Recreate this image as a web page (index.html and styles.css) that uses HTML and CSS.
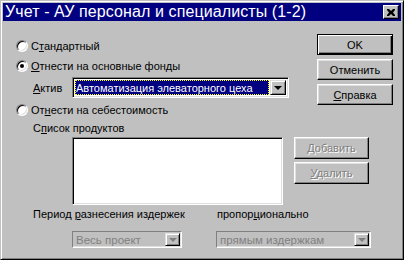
FILE: index.html
```html
<!DOCTYPE html>
<html lang="ru">
<head>
<meta charset="utf-8">
<title>Учет</title>
<link rel="stylesheet" href="styles.css">
</head>
<body>
<div class="window">
  <div class="titlebar">
    <span class="title">Учет - АУ персонал и специалисты (1-2)</span>
    <span class="close"><svg width="8" height="7" viewBox="0 0 8 7"><path d="M0 0h2l2 2 2-2h2v1L6 3.5 8 6v1H6L4 5 2 7H0V6l2-2.5L0 1z" fill="#000"/></svg></span>
  </div>
  <div class="body">
    <div class="top">
      <div class="top-left">
        <div class="radio-row r1"><span class="radio"></span><span>С<u>т</u>андартный</span></div>
        <div class="radio-row r2"><span class="radio checked"></span><span><u>О</u>тнести на основные фонды</span></div>
        <div class="field-row">
          <span class="lbl"><u>А</u>ктив</span>
          <div class="combo combo-active">
            <span class="combo-text"><span class="sel">Автоматизация элеваторного цеха</span></span>
            <span class="drop"><span class="arrow"></span></span>
          </div>
        </div>
        <div class="radio-row r3"><span class="radio"></span><span>От<u>н</u>ести на себестоимость</span></div>
      </div>
      <div class="top-right">
        <div class="btn default">OK</div>
        <div class="btn">Отменить</div>
        <div class="btn"><u>С</u>правка</div>
      </div>
    </div>
    <div class="bottom">
      <div class="lbl list-lbl">С<u>п</u>исок продуктов</div>
      <div class="list-row">
        <div class="listbox"></div>
        <div class="side-btns">
          <div class="btn disabled"><span><u>Д</u>обавить</span></div>
          <div class="btn disabled"><span><u>У</u>далить</span></div>
        </div>
      </div>
      <div class="period-row">
        <span class="lbl period-lbl">Период <u>р</u>азнесения издержек</span>
        <span class="lbl prop-lbl">пропор<u>ц</u>ионально</span>
      </div>
      <div class="combos-row">
        <div class="combo combo-dis w-period"><span class="combo-text">Весь проект</span><span class="drop"><span class="arrow"></span></span></div>
        <div class="combo combo-dis w-prop"><span class="combo-text">прямым издержкам</span><span class="drop"><span class="arrow"></span></span></div>
      </div>
    </div>
  </div>
</div>
</body>
</html>
```

FILE: styles.css
```css
* { box-sizing: border-box; }
html, body { margin: 0; padding: 0; }
body {
  width: 404px;
  height: 260px;
  overflow: hidden;
  font-family: "Liberation Sans", Arial, sans-serif;
  font-size: 11px;
  color: #000;
  background: #c0c0c0;
}
u { text-decoration: underline; text-underline-offset: 1px; }

.window {
  width: 404px;
  height: 260px;
  background: #c0c0c0;
  border: 1px solid;
  border-color: #c0c0c0 #000 #000 #c0c0c0;
  box-shadow: inset 1px 1px #fff, inset -1px -1px #808080;
  padding: 2px;
  display: flex;
  flex-direction: column;
}

.titlebar {
  height: 18px;
  background: #000080;
  color: #fff;
  display: flex;
  align-items: center;
  padding: 0 2px 0 2px;
}
.title {
  flex: 1;
  font-size: 16px;
  line-height: 18px;
  letter-spacing: 0.1px;
  white-space: nowrap;
}
.close {
  width: 16px;
  height: 14px;
  background: #c0c0c0;
  border: 1px solid;
  border-color: #fff #000 #000 #fff;
  box-shadow: inset -1px -1px #808080;
  display: flex;
  align-items: center;
  justify-content: center;
  padding-right: 1px;
}

.body {
  flex: 1;
  display: flex;
  flex-direction: column;
}

.top {
  display: flex;
}
.top-left {
  flex: 1;
  padding-left: 13px;
  padding-top: 15px;
}
.top-right {
  width: 76px;
  margin-right: 8px;
  padding-top: 13px;
  display: flex;
  flex-direction: column;
  gap: 4px;
}

.radio-row {
  display: flex;
  align-items: center;
  height: 20px;
  gap: 3px;
  white-space: nowrap;
}
.radio {
  width: 12px;
  height: 12px;
  border-radius: 50%;
  background: #fff;
  border: 1px solid;
  border-color: #808080 #fff #fff #808080;
  box-shadow: inset 1px 1px #000, inset -1px -1px #dfdfdf;
  display: flex;
  align-items: center;
  justify-content: center;
}
.radio.checked::after {
  content: "";
  width: 4px;
  height: 4px;
  border-radius: 50%;
  background: #000;
}
.r3 { margin-top: 2px; }

.field-row {
  display: flex;
  align-items: center;
  margin-top: 1px;
  padding-left: 17px;
}
.lbl { white-space: nowrap; }
.field-row .lbl { width: 39px; }

.combo {
  display: flex;
  align-items: stretch;
  background: #fff;
  border: 1px solid;
  border-color: #808080 #fff #fff #808080;
  box-shadow: inset 1px 1px #000, inset -1px -1px #dfdfdf;
  padding: 2px;
}
.combo-active {
  width: 217px;
  height: 21px;
}
.combo-text {
  flex: 1;
  display: flex;
  align-items: center;
  white-space: nowrap;
  overflow: hidden;
}
.sel {
  flex: 1;
  align-self: stretch;
  display: flex;
  align-items: center;
  background: #000080;
  color: #fff;
  padding-left: 1px;
  margin-right: 1px;
  outline: 1px dotted #ffff00;
  outline-offset: -1px;
}
.drop {
  width: 16px;
  background: #c0c0c0;
  border: 1px solid;
  border-color: #dfdfdf #000 #000 #dfdfdf;
  box-shadow: inset 1px 1px #fff, inset -1px -1px #808080;
  display: flex;
  align-items: center;
  justify-content: center;
}
.arrow {
  width: 0;
  height: 0;
  border-left: 4px solid transparent;
  border-right: 4px solid transparent;
  border-top: 4px solid #000;
  margin-top: 1px;
}

.btn {
  height: 21px;
  width: 76px;
  background: #c0c0c0;
  border: 1px solid;
  border-color: #fff #000 #000 #fff;
  box-shadow: inset -1px -1px #808080, inset 1px 1px #dfdfdf;
  display: flex;
  align-items: center;
  justify-content: center;
  white-space: nowrap;
}
.btn.default {
  border: 1px solid #000;
  box-shadow: inset 1px 1px #fff, inset -1px -1px #000, inset -2px -2px #808080;
}
.btn.disabled {
  color: #808080;
  text-shadow: 1px 1px #fff;
  width: 75px;
  height: 22px;
}

.bottom {
  padding-left: 30px;
}
.list-lbl {
  margin-top: 1px;
  height: 14px;
  line-height: 14px;
}
.list-row {
  display: flex;
  margin-top: 2px;
  padding-left: 39px;
}
.listbox {
  width: 211px;
  height: 68px;
  background: #fff;
  border: 1px solid;
  border-color: #808080 #fff #fff #808080;
  box-shadow: inset 1px 1px #000, inset -1px -1px #dfdfdf;
}
.side-btns {
  margin-left: 11px;
  display: flex;
  flex-direction: column;
  gap: 3px;
}
.period-row {
  display: flex;
  margin-top: 2px;
  height: 14px;
  line-height: 14px;
}
.period-lbl { width: 184px; }
.combos-row {
  display: flex;
  margin-top: 10px;
  padding-left: 39px;
  gap: 34px;
}
.combo-dis {
  height: 17px;
  background: #c0c0c0;
  color: #808080;
  font-size: 11.5px;
  box-shadow: inset -1px -1px #dfdfdf;
  padding: 1px;
  border-color: #808080 #fff #fff #808080;
}
.combo-dis .combo-text { padding-left: 2px; }
.combo-dis .drop { width: 15px; }
.combo-dis .arrow { border-top-color: #808080; }
.w-period { width: 110px; }
.w-prop { width: 155px; }
```
